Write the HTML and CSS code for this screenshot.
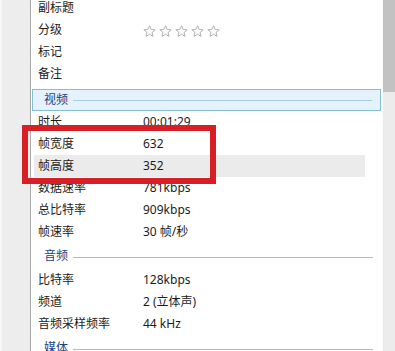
FILE: index.html
```html
<!DOCTYPE html>
<html lang="zh">
<head>
<meta charset="utf-8">
<link rel="stylesheet" href="styles.css">
</head>
<body>
<div class="window">
  <div class="gutter"></div>
  <div class="panel">
    <div class="list">
      <div class="row"><span class="label">副标题</span><span class="value"></span></div>
      <div class="row"><span class="label">分级</span>
        <span class="value stars">
          <svg class="star" viewBox="0 0 14 13"><path d="M7 .8l1.8 4 4.3.4-3.3 2.9 1 4.2L7 10.1l-3.8 2.2 1-4.2L.9 5.2l4.3-.4z"/></svg>
          <svg class="star" viewBox="0 0 14 13"><path d="M7 .8l1.8 4 4.3.4-3.3 2.9 1 4.2L7 10.1l-3.8 2.2 1-4.2L.9 5.2l4.3-.4z"/></svg>
          <svg class="star" viewBox="0 0 14 13"><path d="M7 .8l1.8 4 4.3.4-3.3 2.9 1 4.2L7 10.1l-3.8 2.2 1-4.2L.9 5.2l4.3-.4z"/></svg>
          <svg class="star" viewBox="0 0 14 13"><path d="M7 .8l1.8 4 4.3.4-3.3 2.9 1 4.2L7 10.1l-3.8 2.2 1-4.2L.9 5.2l4.3-.4z"/></svg>
          <svg class="star" viewBox="0 0 14 13"><path d="M7 .8l1.8 4 4.3.4-3.3 2.9 1 4.2L7 10.1l-3.8 2.2 1-4.2L.9 5.2l4.3-.4z"/></svg>
        </span>
      </div>
      <div class="row"><span class="label">标记</span><span class="value"></span></div>
      <div class="row"><span class="label">备注</span><span class="value"></span></div>

      <div class="section boxed"><span class="section-title">视频</span><i class="rule"></i></div>
      <div class="row"><span class="label">时长</span><span class="value">00:01:29</span></div>
      <div class="row"><span class="label">帧宽度</span><span class="value">632</span></div>
      <div class="row hover"><span class="label">帧高度</span><span class="value">352</span></div>
      <div class="row"><span class="label">数据速率</span><span class="value">781kbps</span></div>
      <div class="row"><span class="label">总比特率</span><span class="value">909kbps</span></div>
      <div class="row"><span class="label">帧速率</span><span class="value">30 帧/秒</span></div>

      <div class="section"><span class="section-title">音频</span><i class="rule"></i></div>
      <div class="row"><span class="label">比特率</span><span class="value">128kbps</span></div>
      <div class="row"><span class="label">频道</span><span class="value">2 (立体声)</span></div>
      <div class="row"><span class="label">音频采样频率</span><span class="value">44 kHz</span></div>

      <div class="section"><span class="section-title">媒体</span><i class="rule"></i></div>
    </div>
  </div>
  <div class="scrollbar"><div class="thumb"></div></div>
  <div class="annotation"></div>
</div>
</body>
</html>
```
FILE: styles.css
```css
html, body {
  margin: 0;
  padding: 0;
  background: #ffffff;
}

.window {
  position: relative;
  display: flex;
  width: 395px;
  height: 351px;
  overflow: hidden;
  font-family: "Noto Sans", "Noto Sans CJK SC", sans-serif;
  font-size: 12px;
  color: #1c1c1c;
}

.gutter {
  width: 28px;
  flex: none;
  background: #ededed;
  border-left: 2px solid #f7f7f7;
  border-right: 1px solid #a9a9a9;
}

.panel {
  flex: 1;
  background: #ffffff;
  border-right: 1px solid #fafafa;
}

.list {
  margin-top: -3px;
  display: flex;
  flex-direction: column;
}

.row {
  display: grid;
  grid-template-columns: 109px 1fr;
  height: 22px;
  line-height: 22px;
  margin: 0 17px 0 3px;
  white-space: nowrap;
}

.row.hover {
  background: #ebebeb;
}

.label {
  padding-left: 4px;
}

.stars {
  display: flex;
  align-items: center;
  gap: 3px;
  padding-top: 1px;
}

.star {
  width: 13px;
  height: 12px;
  fill: #fbfbfb;
  stroke: #a3a3a3;
  stroke-width: 0.9;
  stroke-linejoin: round;
}

.section {
  display: flex;
  align-items: center;
  height: 26px;
  margin: 0 1px;
  padding: 0 8px 0 12px;
  box-sizing: border-box;
}

.section.boxed {
  height: 22px;
  margin-top: 4px;
  background: #e4f2fb;
  border: 1px solid #86bdd0;
  padding-left: 11px;
}

.section-title {
  color: #233f86;
  line-height: 20px;
}

.rule {
  flex: 1;
  height: 1px;
  margin-left: 5px;
  margin-top: 2px;
  background: #b3bac4;
}

.section.boxed .rule {
  background: #a8cde0;
  margin-top: 0;
}

.scrollbar {
  width: 12px;
  flex: none;
  background: #ececec;
}

.thumb {
  height: 92px;
  background: #c2c2c2;
}

.annotation {
  position: absolute;
  left: 22px;
  top: 125px;
  width: 182px;
  height: 47px;
  border: 6px solid #d81e26;
}
```
